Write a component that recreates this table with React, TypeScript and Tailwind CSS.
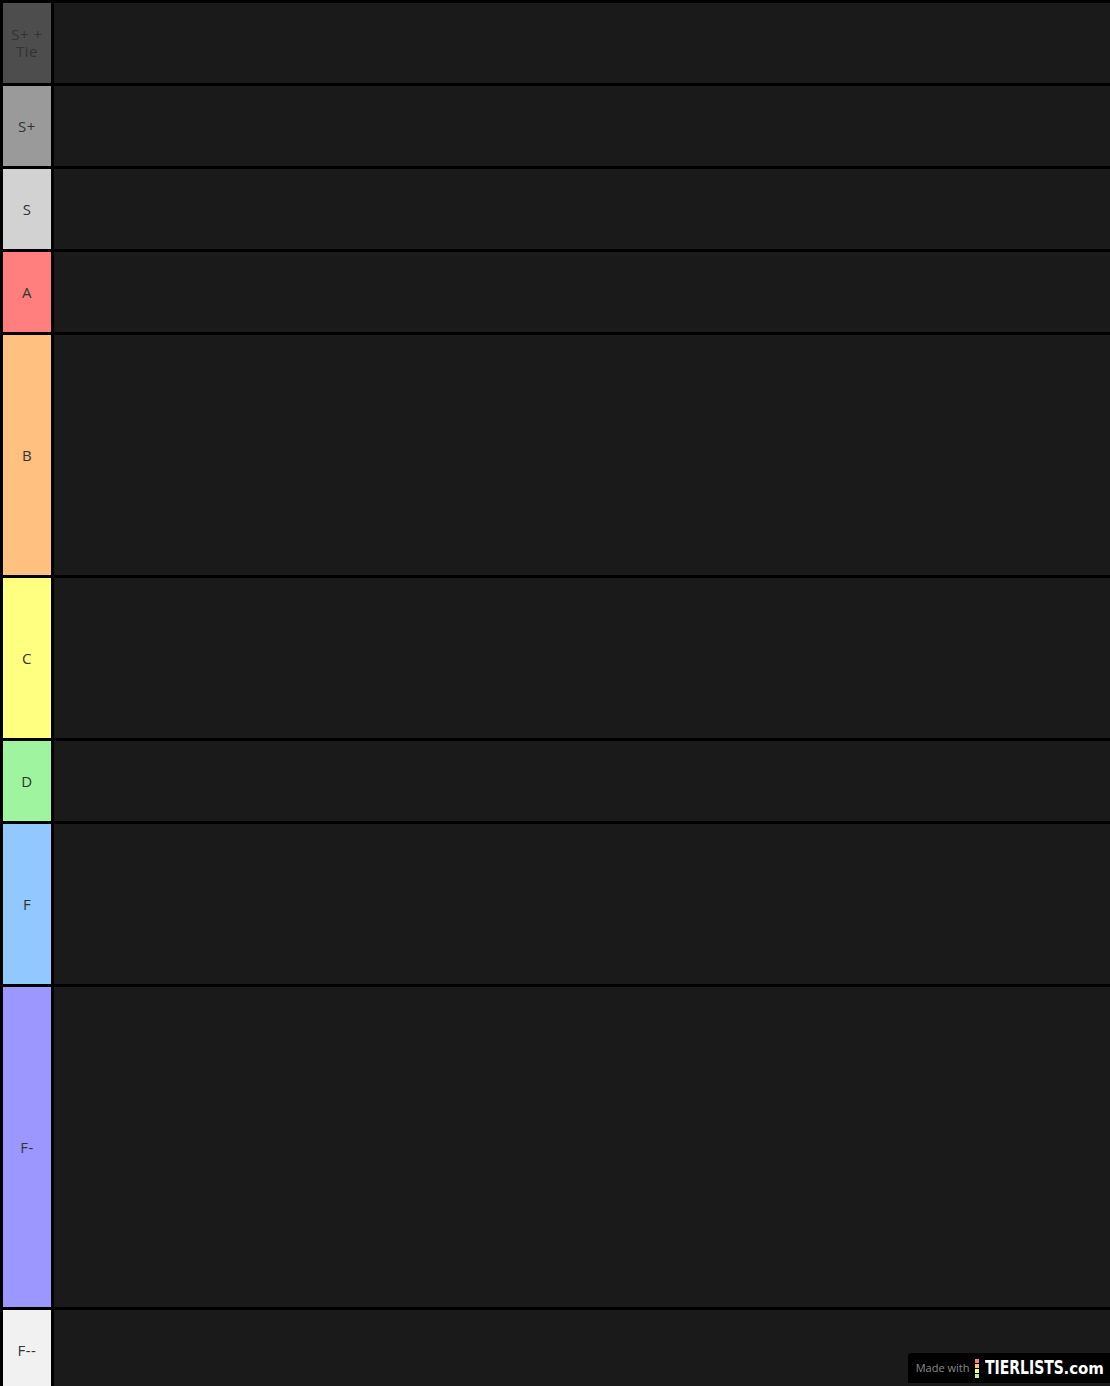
import React from "react";

interface Tier {
  label: React.ReactNode;
  color: string;
  height: string;
}

const TIERS: Tier[] = [
  { label: <>S+ +<br />Tie</>, color: "bg-[#4d4d4d]", height: "h-[80px]" },
  { label: "S+", color: "bg-[#9a9a9a]", height: "h-[80px]" },
  { label: "S", color: "bg-[#d2d2d2]", height: "h-[80px]" },
  { label: "A", color: "bg-[#ff7f7f]", height: "h-[80px]" },
  { label: "B", color: "bg-[#ffc080]", height: "h-[240px]" },
  { label: "C", color: "bg-[#ffff80]", height: "h-[160px]" },
  { label: "D", color: "bg-[#9ff59f]", height: "h-[80px]" },
  { label: "F", color: "bg-[#90c8ff]", height: "h-[160px]" },
  { label: "F-", color: "bg-[#9c97ff]", height: "h-[320px]" },
  { label: "F--", color: "bg-[#f1f1f1]", height: "h-[80px]" },
];

const Watermark = () => (
  <div className="absolute right-0 bottom-[3px] flex items-center h-[30px] pl-[8px] pr-[6px] bg-black rounded-tl-[4px]">
    <span className="text-[11px] text-[#8a8a8a] mr-[6px]" style={{ fontFamily: "'Open Sans', sans-serif" }}>
      Made with
    </span>
    <div className="flex flex-col gap-[1px] mr-[6px]">
      <span className="w-[4px] h-[4px] bg-[#ff7f7f]" />
      <span className="w-[4px] h-[4px] bg-[#ffbf7f]" />
      <span className="w-[4px] h-[4px] bg-[#ffff7f]" />
      <span className="w-[4px] h-[4px] bg-[#a8ff7f]" />
    </div>
    <div className="w-[78px] overflow-visible whitespace-nowrap">
      <span
        className="text-white font-bold text-[20px] leading-none inline-block origin-left scale-x-[0.7]"
        style={{ fontFamily: "'DejaVu Sans', sans-serif" }}
      >
        TIERLISTS
      </span>
    </div>
    <span
      className="text-white font-bold text-[15px] leading-none mt-[3px]"
      style={{ fontFamily: "'DejaVu Sans', sans-serif" }}
    >
      .com
    </span>
  </div>
);

const App = () => {
  return (
    <div className="relative bg-black h-[1386px] overflow-hidden pt-[3px] pl-[3px] flex flex-col gap-[3px]" style={{ fontFamily: "'Open Sans', sans-serif" }}>
      {TIERS.map((tier, index) => (
        <div key={`tier-${index + 1}`} className={`flex gap-[3px] shrink-0 ${tier.height}`}>
          <div className={`w-[48px] flex items-center justify-center text-center text-[15px] leading-[17px] tracking-[0.5px] text-[#333] ${tier.color}`}>
            <span>{tier.label}</span>
          </div>
          <div className="flex-1 bg-[#1a1a1a]" />
        </div>
      ))}
      <Watermark />
    </div>
  );
};

export default App;
